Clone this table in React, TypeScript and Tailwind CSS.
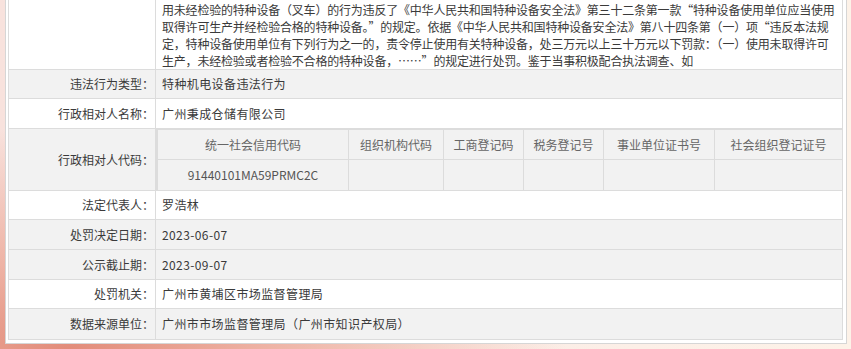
import React from "react";

const lines = [
  "用未经检验的特种设备（叉车）的行为违反了《中华人民共和国特种设备安全法》第三十二条第一款“特种设备使用单位应当使用",
  "取得许可生产并经检验合格的特种设备。”的规定。依据《中华人民共和国特种设备安全法》第八十四条第（一）项“违反本法规",
  "定，特种设备使用单位有下列行为之一的，责令停止使用有关特种设备，处三万元以上三十万元以下罚款：（一）使用未取得许可",
  "生产，未经检验或者检验不合格的特种设备，……”的规定进行处罚。鉴于当事积极配合执法调查、如",
];

type Row = { label: string; value: string; h: string; gray: boolean; last?: boolean };

function SimpleRow({ label, value, h, gray, last }: Row) {
  return (
    <div className={`flex ${h} ${gray ? "bg-[#f2f2f2]" : "bg-white"} ${last ? "" : "border-b border-[#dcdcdc]"}`}>
      <div className="w-[147px] shrink-0 border-r border-[#dcdcdc] flex items-center justify-end pr-[1px] text-[#3a3a3a]">
        {label}
      </div>
      <div className="flex-1 flex items-center pl-[6px] text-[#3a3a3a] tracking-[0.4px]">{value}</div>
    </div>
  );
}

const heads = ["统一社会信用代码", "组织机构代码", "工商登记码", "税务登记号", "事业单位证书号", "社会组织登记证号"];
const vals = ["91440101MA59PRMC2C", "", "", "", "", ""];

export default function App() {
  return (
    <div className="w-[851px] h-[349px] overflow-hidden pl-[5px] font-['Noto_Sans_CJK_SC',sans-serif] text-[12px] bg-[radial-gradient(ellipse_at_8%_100%,#e28c7a_0%,#eeb3a5_18%,rgba(246,214,206,0)_45%),linear-gradient(90deg,#f8e2dd_0%,#fbece6_50%,#fdf2e8_100%)]">
      <div className="w-[842px] border border-t-0 border-[#d6d6d6] bg-white px-[2px] pb-[3px]">
        <div className="w-[835px] border border-t-0 border-[#dcdcdc]">
          <div className="flex h-[70px] bg-white border-b border-[#dcdcdc]">
            <div className="w-[147px] shrink-0 border-r border-[#dcdcdc]" />
            <div className="flex-1 pl-[6px] pt-[1px] text-[#3a3a3a] leading-[17px] tracking-[-0.2px]">
              {lines.map((l, i) => (
                <div key={i} className="whitespace-nowrap">
                  {l}
                </div>
              ))}
            </div>
          </div>
          <SimpleRow label="违法行为类型：" value="特种机电设备违法行为" h="h-[29px]" gray />
          <SimpleRow label="行政相对人名称：" value="广州秉成仓储有限公司" h="h-[30px]" gray={false} />
          <div className="flex h-[62px] bg-[#f2f2f2] border-b border-[#dcdcdc]">
            <div className="w-[147px] shrink-0 border-r border-[#dcdcdc] flex items-center justify-end pr-[1px] text-[#3a3a3a]">
              行政相对人代码：
            </div>
            <div className="flex-1">
              <div className="border-l-2 border-t border-[#dcdcdc] grid grid-cols-[191px_95px_80px_80px_111px_1fr] text-[#666]">
                {heads.map((h, i) => (
                  <div
                    key={h}
                    className={`h-[30px] flex items-center justify-center border-b border-[#dcdcdc] ${i < 5 ? "border-r" : ""}`}
                  >
                    {h}
                  </div>
                ))}
                {vals.map((v, i) => (
                  <div
                    key={i}
                    className={`h-[30px] flex items-center justify-center text-[#555] border-[#dcdcdc] ${i < 5 ? "border-r" : ""}`}
                  >
                    {v}
                  </div>
                ))}
              </div>
            </div>
          </div>
          <SimpleRow label="法定代表人：" value="罗浩林" h="h-[29px]" gray={false} />
          <SimpleRow label="处罚决定日期：" value="2023-06-07" h="h-[30px]" gray />
          <SimpleRow label="公示截止期：" value="2023-09-07" h="h-[30px]" gray />
          <SimpleRow label="处罚机关：" value="广州市黄埔区市场监督管理局" h="h-[29px]" gray={false} />
          <SimpleRow label="数据来源单位：" value="广州市市场监督管理局（广州市知识产权局）" h="h-[30px]" gray last />
        </div>
      </div>
    </div>
  );
}
